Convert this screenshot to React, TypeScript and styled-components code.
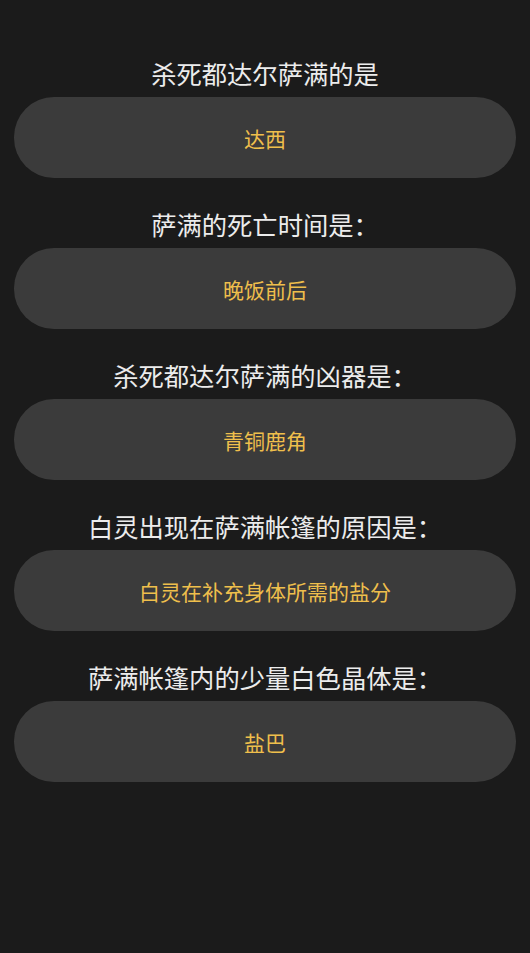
import React from 'react'
import styled, {createGlobalStyle} from 'styled-components'

const GlobalStyle = createGlobalStyle`
  html, body {
    margin: 0;
    padding: 0;
    background-color: #1b1b1b;
  }
  * { box-sizing: border-box; }
`

const Page = styled.main`
  min-height: 953px;
  background-color: #1b1b1b;
  padding: 55px 14px 0;
  display: flex;
  flex-direction: column;
  font-family: "Noto Sans CJK SC", "Noto Sans", sans-serif;
`

const QuestionBlock = styled.section`
  display: flex;
  flex-direction: column;
  margin-bottom: 28px;
`

const Question = styled.h2`
  margin: 0 0 6px;
  height: 36px;
  line-height: 36px;
  text-align: center;
  font-size: 25.3px;
  font-weight: 400;
  color: #ececec;
`

const AnswerPill = styled.div`
  height: 81px;
  border-radius: 40px;
  background-color: #3b3b3b;
  display: flex;
  align-items: center;
  justify-content: center;
  font-size: 21px;
  color: #efbf4c;
`

const items = [
  {q: '杀死都达尔萨满的是', a: '达西'},
  {q: '萨满的死亡时间是：', a: '晚饭前后'},
  {q: '杀死都达尔萨满的凶器是：', a: '青铜鹿角'},
  {q: '白灵出现在萨满帐篷的原因是：', a: '白灵在补充身体所需的盐分'},
  {q: '萨满帐篷内的少量白色晶体是：', a: '盐巴'},
]

export default function App() {
  return (
    <>
      <GlobalStyle />
      <Page>
        {items.map(item => (
          <QuestionBlock key={item.q}>
            <Question>{item.q}</Question>
            <AnswerPill>{item.a}</AnswerPill>
          </QuestionBlock>
        ))}
      </Page>
    </>
  )
}
